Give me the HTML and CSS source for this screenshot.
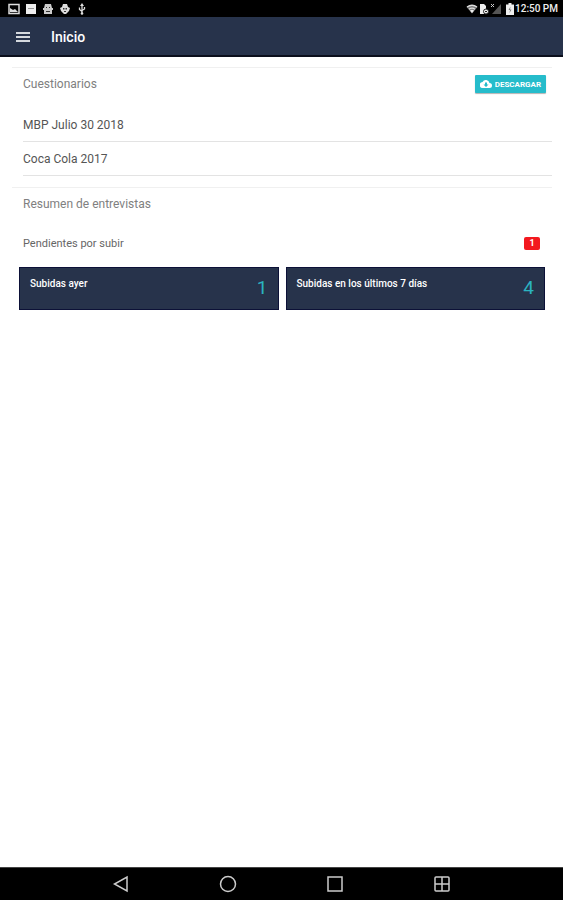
FILE: index.html
```html
<!DOCTYPE html>
<html lang="es">
  <head>
    <meta charset="UTF-8" />
    <meta name="viewport" content="width=device-width, initial-scale=1.0" />
    <title>Inicio</title>
    <link rel="stylesheet" href="styles.css">
  </head>
  <body>
    <div class="status-bar">
      <div class="status-left">
        <svg width="12" height="12" viewBox="0 0 12 12">
          <rect x="1" y="1.5" width="10" height="9" fill="none" stroke="#ddd" stroke-width="1.5" />
          <path d="M2 9V5l3 2 2-1 3 3z" fill="#ddd" />
        </svg>
        <svg width="12" height="12" viewBox="0 0 12 12">
          <rect x="1" y="1" width="10" height="10" fill="#eee" />
          <path d="M3 5.5h6" stroke="#999" />
        </svg>
        <svg width="12" height="12" viewBox="0 0 12 12">
          <path d="M3 1h6l1 4h1v2h-1v4H2V7H1V5h1z" fill="#ccc" />
          <path d="M4 4h1v1H4zM7 4h1v1H7zM4 8h4v1H4z" fill="#333" />
        </svg>
        <svg width="12" height="12" viewBox="0 0 12 12">
          <path d="M4 1h4l1 3 2 1-1 3-3 3H5L2 8 1 5l2-1z" fill="#ddd" />
          <path d="M4 5h1.500v1.500H4zM6.500 5H8v1.500H6.500zM5 8h2v1H5z" fill="#333" />
        </svg>
        <svg width="12" height="12" viewBox="0 0 12 12">
          <path d="M6 2v9M3.500 4.500v2L6 8.500M8.500 4v2L6 7.500" fill="none" stroke="#ddd" stroke-width="1.300" />
          <path d="M6 0l2 3H4z" fill="#ddd" />
          <circle cx="6" cy="10.500" r="1.300" fill="#ddd" />
        </svg>
      </div>
      <div class="status-right">
        <svg width="12" height="12" viewBox="0 0 12 12">
          <path d="M0.500 4Q6 0 11.500 4L6 10.500z" fill="#777" />
          <path d="M1 4Q6 0.500 11 4M3 6.200Q6 4 9 6.200" fill="none" stroke="#ddd" stroke-width="1.300" />
          <path d="M4 7.500Q6 6 8 7.500L6 10z" fill="#eee" />
        </svg>
        <svg width="10" height="12" viewBox="0 0 10 12">
          <path d="M1 1h4l2 2v8H1z" fill="#eee" />
          <circle cx="7" cy="8.500" r="2.500" fill="#eee" stroke="#222" />
          <path d="M6 8.500h2" stroke="#222" />
        </svg>
        <svg width="12" height="12" viewBox="0 0 12 12">
          <path d="M11 1v10H2z" fill="#555" />
          <path d="M1 1l3 3M4 1L1 4" stroke="#ccc" />
        </svg>
        <svg class="battery" width="8" height="12" viewBox="0 0 8 12">
          <path d="M2.500 0h3v1.500H8V12H0V1.500h2.500z" fill="#eee" />
          <path d="M4.500 3.500L2.500 7H4l-.500 3L5.500 6.500H4z" fill="#777" />
        </svg>
        <span>12:50 PM</span>
      </div>
    </div>
    <header class="toolbar">
      <button class="menu-button" type="button" aria-label="Menú">
        <svg width="14" height="10" viewBox="0 0 14 10">
          <path d="M0 1h14M0 5h14M0 9h14" stroke="#d5d9de" stroke-width="2" />
        </svg>
      </button>
      <h1>Inicio</h1>
    </header>
    <main class="content">
      <section class="panel">
        <div class="panel-header">
          <h2>Cuestionarios</h2>
          <button class="download-button" type="button">
            <svg width="12" height="10" viewBox="0 0 24 20">
              <path d="M19 8A7.500 7.500 0 0 0 5 6a6 6 0 0 0 1 12h13a5 5 0 0 0 0-10z" fill="#fff" />
              <path d="M10 7h4v4h3l-5 5-5-5h3z" fill="#26bccb" />
            </svg>
            Descargar
          </button>
        </div>
        <ul class="survey-list">
          <li>MBP Julio 30 2018</li>
          <li>Coca Cola 2017</li>
        </ul>
      </section>
      <section class="panel">
        <div class="panel-header">
          <h2>Resumen de entrevistas</h2>
        </div>
        <div class="pending">
          <span>Pendientes por subir</span>
          <span class="badge">1</span>
        </div>
        <div class="cards">
          <div class="card">
            <h3>Subidas ayer</h3>
            <span class="count">1</span>
          </div>
          <div class="card">
            <h3>Subidas en los últimos 7 días</h3>
            <span class="count">4</span>
          </div>
        </div>
      </section>
    </main>
    <nav class="nav-bar">
      <button type="button" aria-label="Atrás">
        <svg width="18" height="18" viewBox="0 0 18 18">
          <path d="M15 2v14L2.500 9z" />
        </svg>
      </button>
      <button type="button" aria-label="Inicio">
        <svg width="18" height="18" viewBox="0 0 18 18">
          <circle cx="9" cy="9" r="7.500" />
        </svg>
      </button>
      <button type="button" aria-label="Recientes">
        <svg width="18" height="18" viewBox="0 0 18 18">
          <rect x="2" y="2" width="14" height="14" />
        </svg>
      </button>
      <button type="button" aria-label="Ventanas">
        <svg width="18" height="18" viewBox="0 0 18 18">
          <rect x="2" y="2" width="14" height="14" rx="1" />
          <path d="M9 2v14M2 9h14" />
        </svg>
      </button>
    </nav>
  </body>
</html>
```

FILE: styles.css
```css
* {
  box-sizing: border-box;
}
body {
  font-family: Roboto, Arial, sans-serif;
  margin: 0;
  min-height: 100vh;
  display: flex;
  flex-direction: column;
  background-color: #fff;
  color: #555;
}
h1,
h2,
h3,
ul {
  margin: 0;
  padding: 0;
}
button {
  font-family: inherit;
  border: none;
  padding: 0;
  cursor: pointer;
}
svg {
  display: block;
}
.status-bar {
  display: flex;
  justify-content: space-between;
  align-items: center;
  height: 17px;
  padding: 0 5px 0 8px;
  background-color: #000;
  color: #eee;
  font-size: 10px;
  font-weight: 500;
}
.status-left {
  display: flex;
  gap: 5px;
}
.status-right {
  display: flex;
  align-items: center;
  gap: 1px;
}
.battery {
  margin-left: 3px;
}
.toolbar {
  display: flex;
  align-items: center;
  gap: 21px;
  height: 40px;
  padding: 2px 16px 0;
  background-color: #27334b;
  border-bottom: 2px solid #0b0f1c;
}
.menu-button {
  background: none;
}
.toolbar h1 {
  color: #fff;
  font-size: 14px;
  font-weight: 500;
}
.content {
  flex: 1;
  padding: 10px 11px 0 12px;
}
.panel {
  border-top: 1px solid #f0f0f0;
  margin-bottom: 11px;
}
.panel-header {
  display: flex;
  justify-content: space-between;
  align-items: center;
  height: 32px;
  padding: 0 6px 0 11px;
}
.panel-header h2 {
  color: #808080;
  font-size: 12px;
  font-weight: 400;
}
.download-button {
  display: flex;
  align-items: center;
  gap: 3px;
  height: 18px;
  padding: 0 5px;
  border-radius: 1px;
  background-color: #26bccb;
  box-shadow: 0 1px 1px rgba(0, 0, 0, 0.3);
  color: #fff;
  font-size: 8px;
  font-weight: 700;
  text-transform: uppercase;
}
.survey-list {
  list-style: none;
  margin: 8px 0 0 11px;
}
.survey-list li {
  height: 34px;
  line-height: 34px;
  border-bottom: 1px solid #e3e3e3;
  font-size: 12px;
}
.pending {
  display: flex;
  justify-content: space-between;
  align-items: center;
  height: 47px;
  padding: 0 12px 0 11px;
  color: #666;
  font-size: 11px;
}
.badge {
  width: 16px;
  border-radius: 2px;
  background-color: #f3191f;
  color: #fff;
  font-size: 9px;
  font-weight: 700;
  line-height: 13px;
  text-align: center;
}
.cards {
  display: grid;
  grid-template-columns: 1fr 1fr;
  gap: 7px;
  padding: 0 7px;
}
.card {
  display: flex;
  justify-content: space-between;
  height: 43px;
  padding: 0 10px;
  background-color: #27334b;
  border: 1px solid #0c1137;
}
.card h3 {
  color: #fff;
  font-size: 10px;
  font-weight: 500;
  line-height: 32px;
}
.count {
  color: #2bb3c0;
  font-size: 19px;
  line-height: 40px;
}
.nav-bar {
  display: flex;
  justify-content: center;
  height: 33px;
  background-color: #000;
  border-top: 1px solid #444;
}
.nav-bar button {
  display: flex;
  justify-content: center;
  align-items: center;
  width: 19%;
  background: none;
}
.nav-bar svg {
  fill: none;
  stroke: #ccc;
  stroke-width: 1.5;
}
```
